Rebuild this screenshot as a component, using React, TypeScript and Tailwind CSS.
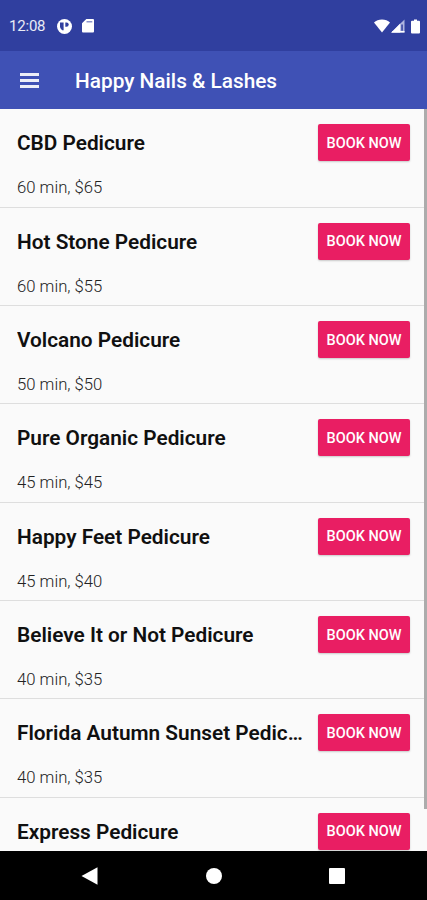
type Service = {
  name: string;
  minutes: number;
  price: number;
};

const services: Service[] = [
  { name: "CBD Pedicure", minutes: 60, price: 65 },
  { name: "Hot Stone Pedicure", minutes: 60, price: 55 },
  { name: "Volcano Pedicure", minutes: 50, price: 50 },
  { name: "Pure Organic Pedicure", minutes: 45, price: 45 },
  { name: "Happy Feet Pedicure", minutes: 45, price: 40 },
  { name: "Believe It or Not Pedicure", minutes: 40, price: 35 },
  { name: "Florida Autumn Sunset Pedicure", minutes: 40, price: 35 },
];

function StatusBar() {
  return (
    <div className="flex h-[51px] shrink-0 items-center bg-[#303f9f] pl-[9px] pr-[7px] pt-px text-white">
      <span className="w-[48px] pt-px text-[15px] leading-none tracking-[-0.2px] text-white/90">12:08</span>
      <svg className="h-[15px] w-[15px]" viewBox="0 0 15 15">
        <circle cx="7.5" cy="7.5" r="7.5" fill="#fff" />
        <path d="M3 3.400h3.600v7.800H5.200A5 5 0 0 1 3 8z" fill="#303f9f" />
        <path d="M8.300 3.400h1.200a2.200 2.200 0 0 1 0 4.400H8.300z" fill="#303f9f" />
      </svg>
      <svg className="ml-[10px] h-[14px] w-[12px]" viewBox="0 0 12 14">
        <path d="M4.300 0H11a1 1 0 0 1 1 1v11.500a1 1 0 0 1-1 1H1a1 1 0 0 1-1-1V4.300z" fill="#fff" />
        <path d="M4.500 2h5.800v1.500H4.500z" fill="#8b94cb" />
      </svg>
      <svg className="ml-auto h-[14px] w-[16px]" viewBox="0 0 16 14">
        <path d="M8 13.500 0 3.600C2 1.600 4.800.5 8 .5s6 1.100 8 3.100z" fill="#fff" />
      </svg>
      <svg className="ml-[1px] h-[14px] w-[14px]" viewBox="0 0 14 14">
        <path d="M13.500.5v13H.3z" fill="#aeb5df" />
        <path d="M9.200 4.600v8.900H.3z" fill="#fff" />
        <path d="M10.300 5.500h1.500v6.300h-1.500z" fill="#303f9f" />
        <path d="M.3 13.500h13.200V12H1.700z" fill="#fff" />
      </svg>
      <svg className="ml-[6px] h-[15px] w-[9px]" viewBox="0 0 9 15">
        <path d="M3 .5h3v1.300h2a1 1 0 0 1 1 1v10.700a1 1 0 0 1-1 1H1a1 1 0 0 1-1-1V2.800a1 1 0 0 1 1-1h2z" fill="#fff" />
      </svg>
    </div>
  );
}

function AppBar() {
  return (
    <header className="flex h-[58px] shrink-0 items-center bg-[#3f51b5] pl-[20px] text-white">
      <button className="flex w-[19px] flex-col gap-[3px]" aria-label="Menu">
        <span className="h-[3px] w-full bg-white/90" />
        <span className="h-[3px] w-full bg-white/90" />
        <span className="h-[3px] w-full bg-white/90" />
      </button>
      <h1 className="ml-[36px] pt-[3px] text-[20.8px] font-medium leading-none">Happy Nails &amp; Lashes</h1>
    </header>
  );
}

function BookButton() {
  return (
    <button className="ml-[12px] h-[37px] w-[92px] shrink-0 rounded-[2px] bg-[#e91e63] pt-[2px] text-[14.5px] font-medium text-white shadow-[0_1px_2px_rgba(0,0,0,0.2)]">
      BOOK NOW
    </button>
  );
}

function ServiceRow({ service }: { service: Service }) {
  return (
    <li className="flex h-[98.33px] shrink-0 items-start border-b border-[#dedede] px-[17px] pt-[15px]">
      <div className="min-w-0 flex-1">
        <h2 className="truncate text-[20.8px] font-semibold leading-[39px] text-[#101010]">{service.name}</h2>
        <p className="mt-[13px] text-[16.7px] font-light leading-[24px] text-[#222]">
          {service.minutes} min, ${service.price}
        </p>
      </div>
      <BookButton />
    </li>
  );
}

function NavigationBar() {
  return (
    <nav className="flex h-[49px] shrink-0 items-center bg-black pl-[81px]">
      <svg className="h-[18px] w-[17px]" viewBox="0 0 17 18">
        <path d="M.5 9 16.500.3v17.400z" fill="#fff" />
      </svg>
      <span className="ml-[108px] h-[16px] w-[16px] rounded-full bg-white" />
      <span className="ml-[107px] h-[16px] w-[16px] rounded-[1px] bg-white" />
    </nav>
  );
}

export default function App() {
  return (
    <div className="flex h-[900px] w-[427px] flex-col overflow-hidden bg-[#fafafa] font-['Roboto',sans-serif]">
      <StatusBar />
      <AppBar />
      <main className="relative min-h-0 flex-1 overflow-hidden pt-[0.3px]">
        <ul className="flex flex-col">
          {services.map((service) => (
            <ServiceRow key={service.name} service={service} />
          ))}
          <li className="flex items-start px-[17px] pt-[15px]">
            <h2 className="min-w-0 flex-1 truncate text-[20.8px] font-semibold leading-[39px] text-[#101010]">
              Express Pedicure
            </h2>
            <BookButton />
          </li>
        </ul>
        {/* scroll thumb */}
        <div className="absolute right-0 top-0 h-[700px] w-[3px] bg-[#acacac]" />
      </main>
      <NavigationBar />
    </div>
  );
}
